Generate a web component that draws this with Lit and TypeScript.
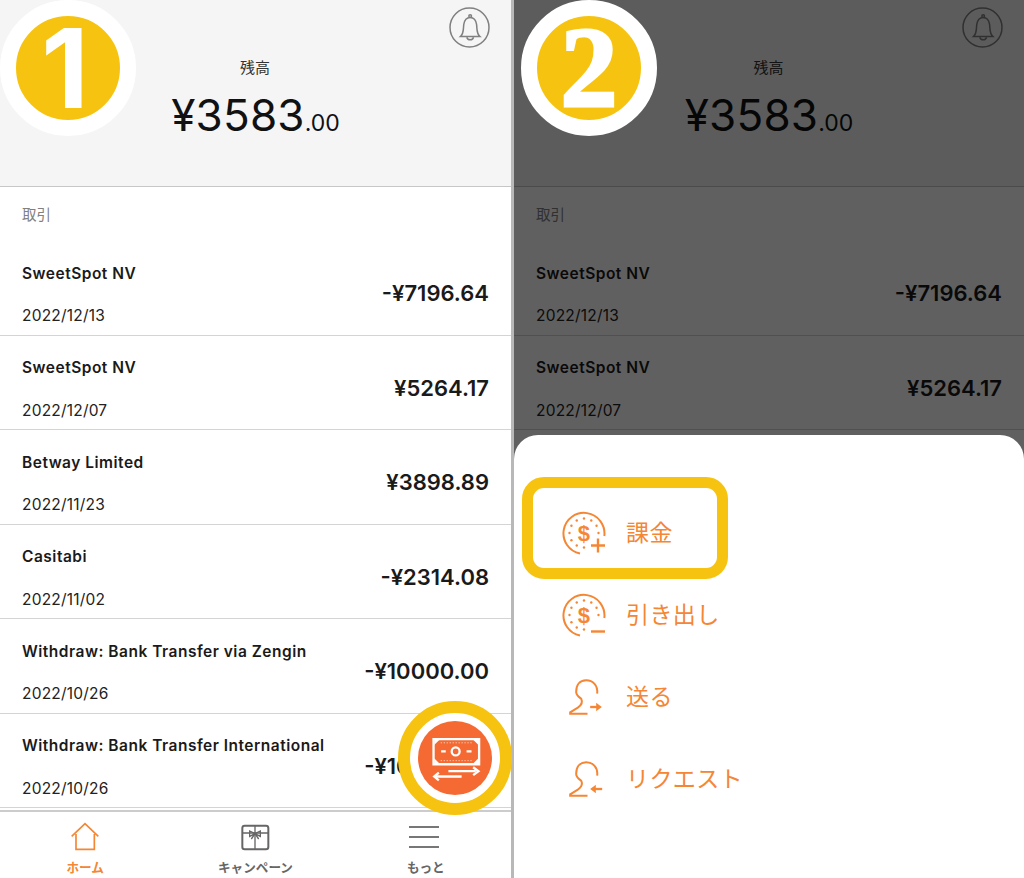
import { LitElement, html, svg, css } from "lit";
import { customElement, property } from "lit/decorators.js";

const FONT = css`Inter, "Noto Sans CJK JP", sans-serif`;

const ROWS = [
  { name: "SweetSpot NV", date: "2022/12/13", amount: "-¥7196.64" },
  { name: "SweetSpot NV", date: "2022/12/07", amount: "¥5264.17" },
  { name: "Betway Limited", date: "2022/11/23", amount: "¥3898.89" },
  { name: "Casitabi", date: "2022/11/02", amount: "-¥2314.08" },
  { name: "Withdraw: Bank Transfer via Zengin", date: "2022/10/26", amount: "-¥10000.00" },
  { name: "Withdraw: Bank Transfer International", date: "2022/10/26", amount: "-¥10000.00" },
];

@customElement("wallet-screen")
export class WalletScreen extends LitElement {
  @property({ type: Number }) limit = 0;
  static styles = css`
    :host { display: flex; flex-direction: column; height: 878px; overflow: hidden; background: #fff; font-family: ${FONT}; }
    .head { height: 187px; box-sizing: border-box; flex: none; background: #f5f5f5; border-bottom: 1px solid #c6c6c6; position: relative; display: flex; flex-direction: column; align-items: center; padding-top: 58px; }
    .bell { position: absolute; right: 21px; top: 7px; width: 41px; height: 41px; }
    .label { font-size: 15px; line-height: 20px; color: #333; margin-right: 1px; }
    .bal { margin-top: 9px; color: #111; font-size: 44px; line-height: 56px; letter-spacing: 0.2px; white-space: nowrap; }
    .bal span { font-size: 23px; letter-spacing: 0; }
    .title { height: 54px; flex: none; box-sizing: border-box; padding: 18px 22px 0; font-size: 14.5px; line-height: 20px; color: #808080; }
    .row { height: 94.5px; flex: none; box-sizing: border-box; padding: 23px 22px 9px; border-bottom: 1px solid #d4d4d4; display: flex; justify-content: space-between; align-items: center; }
    .l { display: flex; flex-direction: column; gap: 22.5px; }
    .name { font-size: 15.5px; line-height: 20px; font-weight: 600; color: #1a1a1a; letter-spacing: 0.5px; white-space: nowrap; }
    .date { font-size: 15.5px; line-height: 20px; color: #222; letter-spacing: 0.2px; }
    .amt { font-size: 22px; line-height: 28px; margin-bottom: 3px; font-weight: 600; color: #1a1a1a; white-space: nowrap; }
    nav { margin-top: 2px; flex: none; height: 68px; box-sizing: border-box; border-top: 2px solid #ccc; display: flex; }
    .item { flex: 1; display: flex; flex-direction: column; align-items: center; padding-top: 9px; color: #666; font-size: 12.6px; font-weight: 700; }
    .item.on { color: #f58634; }
    .ic { width: 40px; height: 33px; }
    .ic.menu { margin-left: -3px; }
    .item div { line-height: 18px; margin-top: 5px; }
  `;
  renderNav() {
    return html`<nav>
      <div class="item on">
        <svg class="ic" viewBox="193 95 120 99" fill="none" stroke="#f58634" stroke-width="5">
          <path d="M213 141L253 103L293 141M226 134V180H281V134" />
        </svg>
        <div>ホーム</div>
      </div>
      <div class="item">
        <svg class="ic" viewBox="703 92 120 99" fill="none" stroke="#666" stroke-width="6">
          <rect x="725" y="106" width="78" height="71" rx="7" />
          <path d="M725 128H803M763 106V177" stroke-width="4" />
          <path d="M763 130L747 122V138ZM763 130L779 122V138ZM763 130L752 146M763 130L774 146" stroke-width="4" />
        </svg>
        <div>キャンペーン</div>
      </div>
      <div class="item">
        <svg class="ic menu" viewBox="0 0 40 33" fill="none" stroke="#777" stroke-width="2">
          <path d="M5 6H35M5 16H35M5 26H35" />
        </svg>
        <div>もっと</div>
      </div>
    </nav>`;
  }
  render() {
    const rows = this.limit ? ROWS.slice(0, this.limit) : ROWS;
    return html`
      <div class="head">
        <svg class="bell" viewBox="1345 20 122 122" fill="none" stroke="#808080" stroke-width="4.5">
          <circle cx="1406" cy="81" r="58" />
          <path d="M1379 108C1390 98 1387 85 1389 72C1391 58 1398 51 1408 51C1418 51 1425 58 1427 72C1429 85 1426 98 1437 108Z" />
          <circle cx="1408" cy="47" r="4" />
          <path d="M1398 110C1400 120 1416 120 1418 110" />
        </svg>
        <div class="label">残高</div>
        <div class="bal">¥3583<span>.00</span></div>
      </div>
      <div class="title">取引</div>
      ${rows.map(
        (r) => html`<div class="row">
          <div class="l"><div class="name">${r.name}</div><div class="date">${r.date}</div></div>
          <div class="amt">${r.amount}</div>
        </div>`
      )}
      ${this.limit ? "" : this.renderNav()}
    `;
  }
}

const DOTS = [0, 30, 60, 90, 180, 210, 240, 270, 300, 330];

@customElement("action-sheet")
export class ActionSheet extends LitElement {
  static styles = css`
    :host { display: block; position: absolute; left: 0; right: 0; top: 435px; bottom: 0; background: #fff; border-radius: 24px 24px 0 0; font-family: ${FONT}; }
    .list { padding: 57px 0 0 48px; display: flex; flex-direction: column; }
    .row { height: 82px; display: flex; align-items: center; gap: 20px; color: #f58634; font-size: 23px; letter-spacing: 0.4px; }
    .row span { margin-bottom: 4px; }
    .ic { width: 44px; height: 44px; flex: none; }
    .ic.p { width: 37px; margin: 0 3.5px; height: 40px; }
    .hl { position: absolute; left: 8px; top: 42px; width: 206px; height: 102px; box-sizing: border-box; border: 11px solid #f6c410; border-radius: 22px; }
    .dollar { font-family: "Liberation Sans", sans-serif; font-weight: 700; font-size: 22px; fill: #f58634; }
  `;
  coin(plus: boolean) {
    return html`<svg class="ic" viewBox="0 0 44 44" fill="none" stroke="#f58634" stroke-width="2">
      <path d="M18 42.5A20.5 20.5 0 1 1 42.3 25" />
      ${DOTS.map((a) => {
        const t = (a * Math.PI) / 180;
        return svg`<circle cx=${22 + 14.5 * Math.sin(t)} cy=${22 - 14.5 * Math.cos(t)} r="1.2" fill="#f58634" stroke="none" />`;
      })}
      <text class="dollar" x="22" y="29.5" text-anchor="middle" stroke="none">$</text>
      ${plus
        ? svg`<path d="M29 34.5H43M36 27.5V41.5" stroke-width="2.4" />`
        : svg`<path d="M29 38.5H43" stroke-width="2.4" />`}
    </svg>`;
  }
  person(send: boolean) {
    return html`<svg class="ic p" viewBox="160 80 110 120" fill="none" stroke="#f58634" stroke-width="6">
      <path d="M253 130C256 105 240 90 220 90C200 90 190 105 190 125C190 135 198 140 205 145C210 155 205 165 195 172L172 186V190H224" />
      ${send
        ? svg`<path d="M232 170H258" stroke-width="7" /><path d="M250 157L267 170L250 183Z" fill="#f58634" stroke="none" />`
        : svg`<path d="M242 170H268" stroke-width="7" /><path d="M249 157L232 170L249 183Z" fill="#f58634" stroke="none" />`}
    </svg>`;
  }
  render() {
    return html`
      <div class="hl"></div>
      <div class="list">
        <div class="row">${this.coin(true)}<span>課金</span></div>
        <div class="row">${this.coin(false)}<span>引き出し</span></div>
        <div class="row">${this.person(true)}<span>送る</span></div>
        <div class="row">${this.person(false)}<span>リクエスト</span></div>
      </div>
    `;
  }
}

@customElement("app-root")
export class AppRoot extends LitElement {
  static styles = css`
    :host { display: block; width: 1024px; height: 878px; overflow: hidden; position: relative; background: #b8b8b8; }
    .page { display: grid; grid-template-columns: 511px 510px; column-gap: 3px; height: 878px; }
    .panel { position: relative; height: 878px; overflow: hidden; }
    .scrim { position: absolute; inset: 0; background: rgba(0, 0, 0, 0.625); }
    .badge { position: absolute; top: 0; width: 136px; height: 136px; box-sizing: border-box; border: 16px solid #fff; border-radius: 50%; background: #f6c410; color: #fff; display: flex; align-items: center; justify-content: center; }
    .b1 { left: 0; font: 700 110px/1 Inter, sans-serif; padding-right: 6px; }
    .b2 { left: 521px; font: 700 114px/1 "Liberation Serif", serif; -webkit-text-stroke: 3px #fff; }
    .fab { position: absolute; left: 398px; top: 701px; width: 114px; height: 114px; box-sizing: border-box; border: 12px solid #f6c410; border-radius: 50%; background: #fff; display: flex; align-items: center; justify-content: center; }
    .fab svg { width: 74px; height: 74px; }
  `;
  render() {
    return html`
      <div class="page">
        <div class="panel"><wallet-screen></wallet-screen></div>
        <div class="panel">
          <wallet-screen limit="2"></wallet-screen>
          <div class="scrim"></div>
          <action-sheet></action-sheet>
        </div>
      </div>
      <div class="badge b1">1</div>
      <div class="badge b2">2</div>
      <div class="fab">
        <svg viewBox="113 91 224 224" fill="none" stroke="#fff" stroke-width="7">
          <circle cx="225" cy="203" r="112" fill="#f56a32" stroke="none" />
          <path d="M160 146H298V222H160Z" />
          <path d="M182 157H276M182 211H276" stroke-width="2.5" stroke-dasharray="3 6" />
          <circle cx="227" cy="183" r="12" />
          <path d="M183 183H197M260 183H275" />
          <path d="M205 243H288M165 259H245" />
          <path d="M280 231L296 243L280 255M176 247L162 259L176 271" />
          <path d="M162 148L178 148L162 164ZM296 148L280 148L296 164ZM162 220L178 220L162 204ZM296 220L280 220L296 204Z" fill="#fff" stroke="none" />
        </svg>
      </div>
    `;
  }
}
